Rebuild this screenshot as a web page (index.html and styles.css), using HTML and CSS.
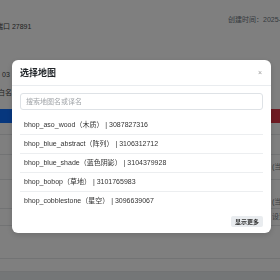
FILE: index.html
```html
<!DOCTYPE html>
<html lang="zh-CN">
  <head>
    <meta charset="UTF-8" />
    <meta name="viewport" content="width=device-width, initial-scale=1.0" />
    <title>选择地图</title>
    <link rel="stylesheet" href="styles.css">
  </head>
  <body>
    <div class="page">
      <div class="meta">
        <span class="port">端口 27891</span>
        <span class="created">创建时间：2025-06-18 12:30</span>
      </div>
      <div class="date">03</div>
      <div class="mode">白名单</div>
      <div class="actions">
        <span class="btn btn-primary"></span>
        <span class="btn btn-danger"></span>
      </div>
      <div class="table">
        <div class="row r1"></div>
        <div class="row r2"></div>
        <div class="row r3"><span class="side">(当前)</span></div>
        <div class="row r4"><span class="side">(当前)</span></div>
        <div class="row r5"><span class="side">设置</span></div>
        <div class="row r6"></div>
        <div class="row r7"></div>
        <div class="footer"></div>
      </div>
    </div>

    <div class="backdrop">
      <div class="modal">
        <div class="modal-header">
          <h5 class="modal-title">选择地图</h5>
          <span class="close">×</span>
        </div>
        <div class="modal-body">
          <input type="text" class="search" placeholder="搜索地图名或译名" />
          <ul class="map-list">
            <li>bhop_aso_wood（木质） | 3087827316</li>
            <li>bhop_blue_abstract（阵列） | 3106312712</li>
            <li>bhop_blue_shade（蓝色阴影） | 3104379928</li>
            <li>bhop_bobop（草地） | 3101765983</li>
            <li>bhop_cobblestone（星空） | 3096639067</li>
          </ul>
          <div class="more-row">
            <button class="more">显示更多</button>
          </div>
        </div>
      </div>
    </div>
  </body>
</html>
```

FILE: styles.css
```css
* {
  box-sizing: border-box;
}

body {
  margin: 0;
  width: 280px;
  height: 280px;
  overflow: hidden;
  background-color: #fff;
  font-family: "Liberation Sans", "Noto Sans CJK SC", sans-serif;
  color: #212529;
}

.page {
  width: 280px;
  overflow: hidden;
  font-size: 7px;
  line-height: 8px;
  color: #6c757d;
}

.meta {
  display: grid;
  grid-template-columns: 232px 1fr;
  margin-left: -4px;
  padding-top: 16px;
  height: 34px;
}

.port {
  margin-top: 7px;
  color: #444;
}

.created {
  white-space: nowrap;
  overflow: hidden;
}

.date {
  margin-top: 37px;
  padding-left: 2px;
  color: #444;
}

.mode {
  margin-top: 10px;
  margin-left: -2px;
  color: #444;
}

.actions {
  display: flex;
  justify-content: space-between;
  margin-top: 12px;
  height: 14px;
}

.btn {
  display: block;
  width: 120px;
  height: 14px;
}

.btn-primary {
  background-color: #0d6efd;
}

.btn-danger {
  background-color: #dc3545;
}

.row {
  display: flex;
  justify-content: flex-end;
  align-items: center;
  border-bottom: 1px solid #e4e6e8;
}

.side {
  width: 8px;
  overflow: hidden;
  white-space: nowrap;
}

.r1 { height: 12px; }
.r2 { height: 20px; }
.r3 { height: 25px; }
.r4 { height: 29px; align-items: flex-end; padding-bottom: 2px; }
.r5 { height: 17px; }
.r6 { height: 33px; }
.r7 { height: 13px; }

.footer {
  height: 20px;
  background-color: #e9ecef;
}

/* modal */
.backdrop {
  position: fixed;
  top: 0;
  left: 0;
  z-index: 10;
  width: 280px;
  height: 280px;
  background-color: rgba(0, 0, 0, 0.5);
}

.modal {
  width: 259px;
  margin: 60px 0 0 12px;
  background-color: #fff;
  border-radius: 6px;
  box-shadow: 0 2px 6px rgba(0, 0, 0, 0.15);
}

.modal-header {
  display: flex;
  justify-content: space-between;
  align-items: center;
  height: 26px;
  padding: 0 8px;
  border-bottom: 1px solid #e9ecef;
}

.modal-title {
  margin: 0;
  font-size: 9px;
  font-weight: bold;
  line-height: 10px;
}

.close {
  font-size: 7px;
  color: #999;
  margin-right: 1px;
}

.modal-body {
  padding: 7px 8px 6px;
}

.search {
  display: block;
  width: 100%;
  height: 17px;
  padding: 0 5px;
  font-family: inherit;
  font-size: 7px;
  border: 1px solid #dee2e6;
  border-radius: 3px;
  outline: none;
}

.search::placeholder {
  color: #a0a4a8;
}

.map-list {
  list-style: none;
  margin: 5px 0 0;
  padding: 0;
}

.map-list li {
  padding: 5px 4px;
  font-size: 7px;
  line-height: 7.9px;
  color: #333;
  border-top: 1px solid #eceef0;
}

.map-list li:first-child {
  border-top: none;
  padding-top: 6.1px;
}

.more-row {
  display: flex;
  justify-content: flex-end;
  margin-top: 6px;
}

.more {
  height: 11px;
  padding: 0 4px;
  font-family: inherit;
  font-size: 6px;
  font-weight: bold;
  color: #333;
  background-color: #e9ecef;
  border: none;
  border-radius: 2px;
}
```
